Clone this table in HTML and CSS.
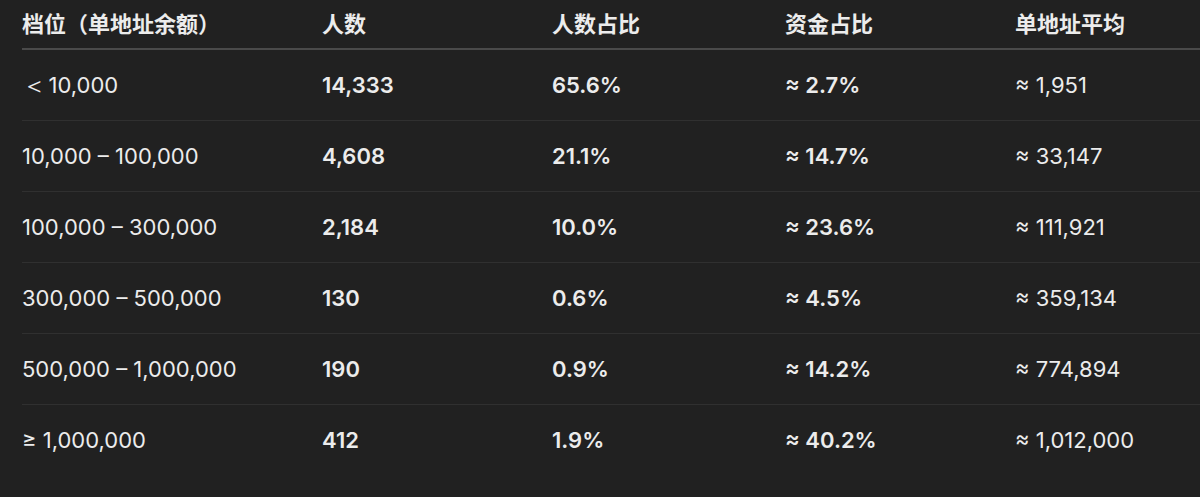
FILE: index.html
```html
<!DOCTYPE html>
<html lang="zh-CN">
<head>
<meta charset="utf-8">
<link rel="stylesheet" href="styles.css">
</head>
<body>
<div class="wrap">
  <table class="tbl">
    <colgroup>
      <col class="c1"><col class="c2"><col class="c3"><col class="c4"><col class="c5">
    </colgroup>
    <thead>
      <tr><th>档位（单地址余额）</th><th>人数</th><th>人数占比</th><th>资金占比</th><th>单地址平均</th></tr>
    </thead>
    <tbody>
      <tr><td><span class="lt">&lt;</span> 10,000</td><td class="b">14,333</td><td class="b">65.6%</td><td class="b">≈ 2.7%</td><td>≈ 1,951</td></tr>
      <tr><td>10,000 – 100,000</td><td class="b">4,608</td><td class="b">21.1%</td><td class="b">≈ 14.7%</td><td>≈ 33,147</td></tr>
      <tr><td>100,000 – 300,000</td><td class="b">2,184</td><td class="b">10.0%</td><td class="b">≈ 23.6%</td><td>≈ 111,921</td></tr>
      <tr><td>300,000 – 500,000</td><td class="b">130</td><td class="b">0.6%</td><td class="b">≈ 4.5%</td><td>≈ 359,134</td></tr>
      <tr><td>500,000 – 1,000,000</td><td class="b">190</td><td class="b">0.9%</td><td class="b">≈ 14.2%</td><td>≈ 774,894</td></tr>
      <tr><td>≥ 1,000,000</td><td class="b">412</td><td class="b">1.9%</td><td class="b">≈ 40.2%</td><td>≈ 1,012,000</td></tr>
    </tbody>
  </table>
</div>
</body>
</html>
```

FILE: styles.css
```css
html, body {
  margin: 0;
  padding: 0;
  background: #212121;
}
body {
  font-family: Inter, "Noto Sans CJK SC", sans-serif;
  color: #ececec;
  overflow: hidden;
}
.wrap {
  padding-left: 22px;
  overflow: hidden;
}
.tbl {
  border-collapse: collapse;
  width: 1230px;
  table-layout: fixed;
  font-size: 22px;
}
.c1 { width: 300px; }
.c2 { width: 230px; }
.c3 { width: 233px; }
.c4 { width: 230px; }
.c5 { width: 237px; }
th {
  text-align: left;
  font-weight: 600;
  height: 49px;
  padding: 0 0 1px 0;
  vertical-align: middle;
  border-bottom: 2px solid #4a4a4a;
  line-height: 1;
  box-sizing: border-box;
}
td {
  padding: 0;
  height: 70px;
  vertical-align: middle;
  border-bottom: 1px solid #303030;
  font-weight: 400;
  line-height: 1;
}
tbody tr:last-child td {
  border-bottom: none;
}
td.b {
  font-weight: 600;
}
.lt {
  display: inline-block;
  font-weight: 300;
  padding-left: 3px;
  transform: scaleX(1.25);
  transform-origin: left center;
  margin-right: 3px;
}
```
